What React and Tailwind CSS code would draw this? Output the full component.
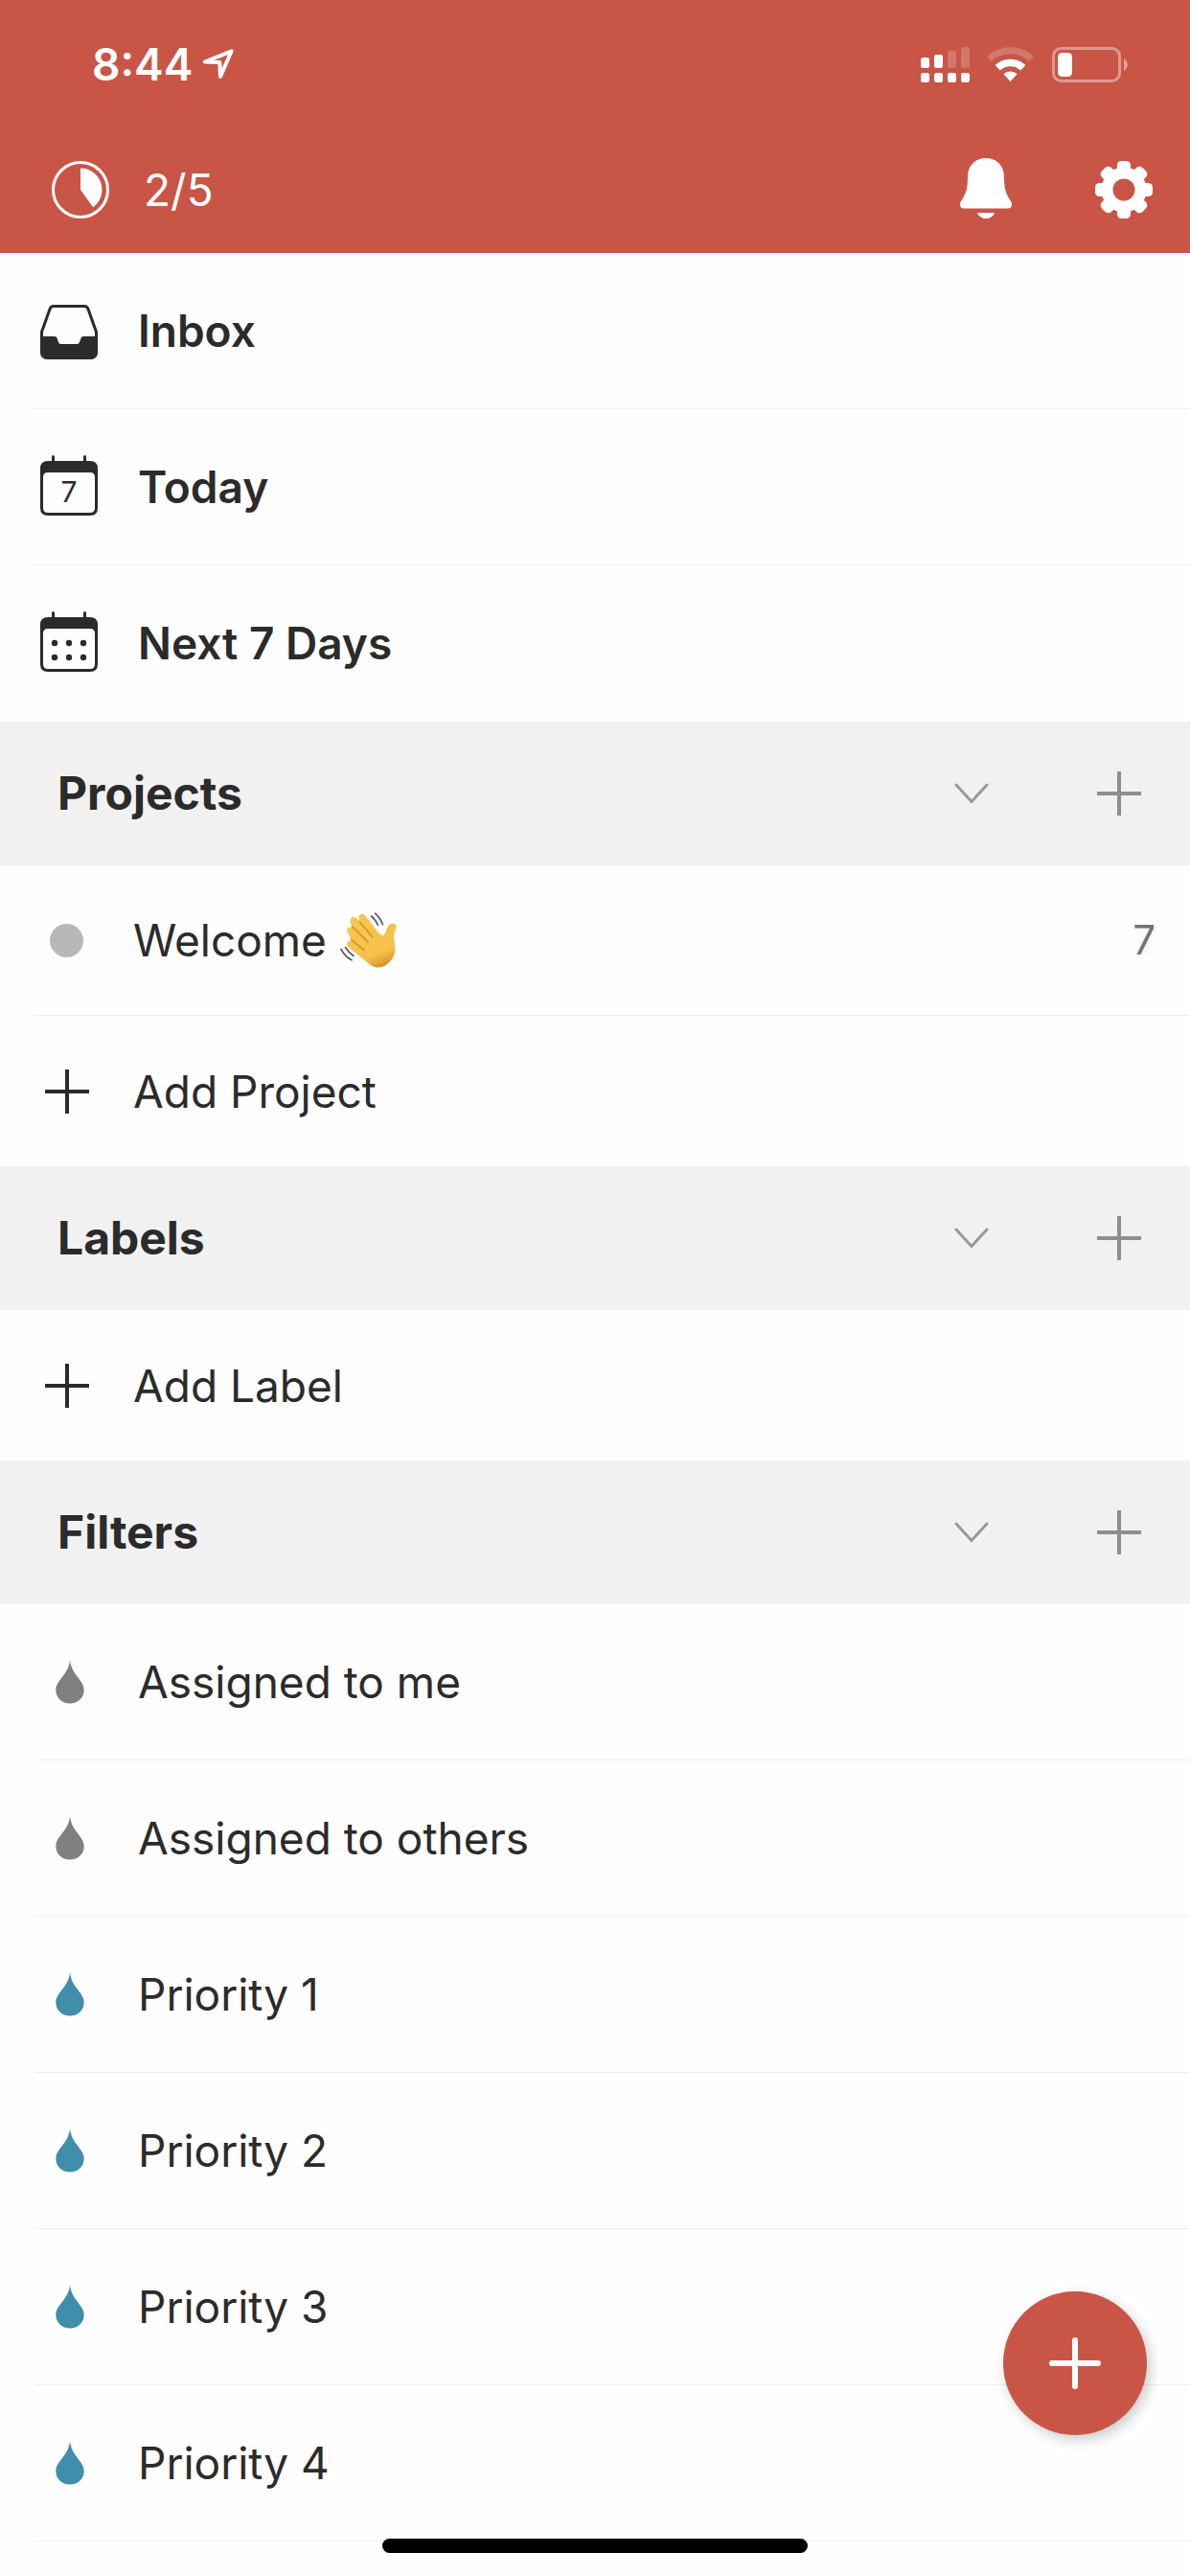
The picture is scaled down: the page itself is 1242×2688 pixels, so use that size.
import React from 'react';

const LocationIcon = () => (
  <svg width="36" height="36" viewBox="0 0 36 36" fill="none" stroke="currentColor" strokeWidth="4" strokeLinejoin="round" aria-hidden="true">
    <path d="M32.7 4.3 4.8 15.6l15.5.4.7 15z" />
  </svg>
);

const SignalIcon = () => (
  <svg width="51" height="37" viewBox="0 0 51 37" fill="currentColor" role="img" aria-label="Signal">
    <rect x="0" y="11" width="9" height="11" rx="2.5" />
    <rect x="14" y="8" width="9" height="14" rx="2.5" />
    <rect x="28" y="4" width="9" height="18" rx="2.5" opacity="0.2" />
    <rect x="42" y="0" width="9" height="22" rx="2.5" opacity="0.2" />
    <rect x="0" y="27" width="9" height="10" rx="2.5" />
    <rect x="14" y="27" width="9" height="10" rx="2.5" />
    <rect x="28" y="27" width="9" height="10" rx="2.5" />
    <rect x="42" y="27" width="9" height="10" rx="2.5" />
  </svg>
);

const WifiIcon = () => (
  <svg width="50" height="37" viewBox="0 0 50 37" fill="none" stroke="currentColor" role="img" aria-label="Wi-Fi">
    <path d="M2.5 12.4a32.3 32.3 0 0 1 44 0" strokeWidth="7" opacity="0.2" />
    <path d="M11.2 21.7a19.5 19.5 0 0 1 26.6 0" strokeWidth="7.5" />
    <path d="M24.5 36l-7.2-7.7a10.5 10.5 0 0 1 14.4 0z" fill="currentColor" stroke="none" />
  </svg>
);

const BatteryIcon = () => (
  <svg width="79" height="37" viewBox="0 0 79 37" role="img" aria-label="Battery">
    <rect x="1.5" y="1.5" width="69" height="34" rx="8" fill="none" stroke="currentColor" strokeWidth="3" opacity="0.4" />
    <path d="M75 12c5 2.5 5 10.5 0 13z" fill="currentColor" opacity="0.45" />
    <rect x="6" y="6" width="15" height="25" rx="4.5" fill="currentColor" />
  </svg>
);

const ProgressIcon = () => (
  <svg width="60" height="60" viewBox="0 0 60 60" aria-hidden="true">
    <circle cx="30" cy="30" r="28.5" fill="none" stroke="currentColor" strokeWidth="3" />
    <path d="M30 30V7.5A22.5 22.5 0 0 1 43.2 48.2z" fill="currentColor" />
  </svg>
);

const BellIcon = () => (
  <svg width="54" height="66" viewBox="0 0 54 66" fill="currentColor" aria-hidden="true">
    <path d="M27 0c11 0 19 8 19 19 0 14 2 18 7 26 2.5 4 .5 7.5-3 7.500H4c-3.500 0-5.500-3.500-3-7.500 5-8 7-12 7-26C8 8 16 0 27 0z" />
    <path d="M18 57h18c-1.500 4-5 6-9 6s-7.500-2-9-6z" />
  </svg>
);

const GearIcon = () => (
  <svg width="60" height="60" viewBox="-30 -30 60 60" fill="currentColor" aria-hidden="true">
    <circle r="17.5" fill="none" stroke="currentColor" strokeWidth="12" />
    {[0, 45, 90, 135, 180, 225, 270, 315].map((angle) => (
      <rect key={angle} x="-7" y="-30" width="14" height="14" rx="4.5" transform={`rotate(${angle})`} />
    ))}
  </svg>
);

const InboxIcon = () => (
  <svg width="60" height="66" viewBox="0 0 60 66" aria-hidden="true">
    <path d="M14 7.5h32q3 0 4 3l8.500 24V54q0 7.500-7.500 7.500H9Q1.500 61.500 1.500 54V34.500L10 10.500q1-3 4-3z" fill="none" stroke="currentColor" strokeWidth="3" />
    <path d="M0 39h15q2 0 2.600 2l1.200 3.500q.8 2.500 2.700 2.500h17q1.900 0 2.700-2.500l1.200-3.500q.6-2 2.600-2h15v16q0 8-8 8H8q-8 0-8-8z" fill="currentColor" />
  </svg>
);

const CalendarIcon = ({ children }) => (
  <svg width="60" height="66" viewBox="0 0 60 66" fill="currentColor" aria-hidden="true">
    <path d="M12 8V1.500a1.500 1.500 0 0 1 3 0V8zM45 8V1.500a1.500 1.500 0 0 1 3 0V8z" />
    <path fillRule="evenodd" d="M8 6h44q8 0 8 8v41q0 8-8 8H8q-8 0-8-8V14q0-8 8-8zm0 12q-5 0-5 5v32q0 5 5 5h44q5 0 5-5V23q0-5-5-5z" />
    {children}
  </svg>
);

const TodayIcon = () => (
  <CalendarIcon>
    <text x="30" y="49" fontSize="30" fontWeight="400" textAnchor="middle">7</text>
  </CalendarIcon>
);

const WeekIcon = () => (
  <CalendarIcon>
    {[33, 48].map((cy) => [15, 30, 45].map((cx) => <circle key={`${cx}-${cy}`} cx={cx} cy={cy} r="3.2" />))}
  </CalendarIcon>
);

const PlusIcon = () => (
  <svg width="46" height="46" viewBox="0 0 46 46" stroke="currentColor" strokeWidth="4" aria-hidden="true">
    <path d="M23 0v46M0 23h46" />
  </svg>
);

const ChevronIcon = () => (
  <svg width="36" height="22" viewBox="0 0 36 22" fill="none" stroke="currentColor" strokeWidth="3" strokeLinecap="round" aria-hidden="true">
    <path d="M2 2l16 17.500L34 2" />
  </svg>
);

const DropIcon = () => (
  <svg width="30" height="46" viewBox="0 0 30 46" fill="currentColor" aria-hidden="true">
    <path d="M15 0c1.500 16 14.700 21 14.700 31.500C29.700 39.500 23.500 45.500 15 45.500S.3 39.500.3 31.500C.3 21 13.500 16 15 0z" />
  </svg>
);

const WaveIcon = () => (
  <svg width="60" height="58" viewBox="0 0 60 58" fill="none" strokeLinecap="round" role="img" aria-label="Waving hand">
    <defs>
      <linearGradient id="skin" x1="0.3" y1="0" x2="0.7" y2="1">
        <stop offset="0" stopColor="#f7c64c" />
        <stop offset="0.75" stopColor="#f4c24a" />
        <stop offset="1" stopColor="#d98e2b" />
      </linearGradient>
    </defs>
    <path
      fill="url(#skin)"
      d="M12.500 5.200c2-.9 4 .2 5.500 1.800l4 4.500-2-4c-1-2.500-.5-4.500 1.300-5.300 2.200-1 4.300.3 5.900 2.300L40 21.500c1.500 2 3.500 3.300 5 2.500 2-1 2.500-4 4-7.500 1.500-3.800 4-5.500 6.800-5 3 .6 3.500 3 2.200 6-2 4.500-2 7-1.400 12 .8 6.500 1.400 12-1.100 17C52 53 46 57.500 39.500 57.500c-4 0-7-1.500-11-5L9 36.500c-2-1.700-2.500-3.500-1.300-5.300 1-1.600 2.800-1.700 4.800-.7L8.500 22c-1.800-2-2-4-.8-5.500 1-1.200 2.500-1.300 4.300-.5l-.5-3.500c-1.800-2.500-1.300-6.200 1-7.300z"
    />
    <path d="M20 9.500l13.500 16M12.500 15l16.500 16M11.500 28.500l13.500 11" stroke="#d9932f" strokeWidth="1.8" />
    <path d="M43 30c-3.500 4-4.500 9-2.500 13" stroke="#e6aa3a" strokeWidth="1" opacity="0.5" />
    <path d="M36.500 1.200c3.500 2.800 6 6.500 8 11.500M32.500 4c3 2.300 5.200 5.500 7 9.500M5.500 36.500c2.500 4 5 6.800 8.500 9M1 38.500c3 5.500 6.500 9 11 11.300" stroke="#555" strokeWidth="1.6" />
  </svg>
);

const views = [
  { label: 'Inbox', icon: InboxIcon },
  { label: 'Today', icon: TodayIcon },
  { label: 'Next 7 Days', icon: WeekIcon }
];

const filters = [
  { label: 'Assigned to me', color: 'text-[#808080]' },
  { label: 'Assigned to others', color: 'text-[#808080]' },
  { label: 'Priority 1', color: 'text-[#408eac]' },
  { label: 'Priority 2', color: 'text-[#408eac]' },
  { label: 'Priority 3', color: 'text-[#408eac]' },
  { label: 'Priority 4', color: 'text-[#408eac]' }
];

const SectionHeader = ({ title }) => (
  <div className="flex h-[150px] items-center bg-[#f1f1f1] pl-15 pr-[51px]">
    <h2 className="flex-1 text-5xl font-bold">{title}</h2>
    <button className="mr-[113px] text-[#999999]" aria-label={`Collapse ${title}`}>
      <ChevronIcon />
    </button>
    <button className="text-[#8e8e8e]" aria-label={`Add to ${title}`}>
      <PlusIcon />
    </button>
  </div>
);

const AddRow = ({ label }) => (
  <button className="flex h-[157px] w-full items-center gap-[46px] pl-[47px] text-left">
    <PlusIcon />
    {label}
  </button>
);

const App = () => {
  return (
    <div className="min-h-screen bg-[#fefefe] font-['Inter',sans-serif] text-[46px] leading-[56px] text-[#2b2b2b]">
      <header className="bg-[#c95546] text-white">
        {/* Status bar */}
        <div className="flex h-[132px] items-center justify-between pt-0.5 pl-24 pr-[65px]">
          <div className="flex items-center gap-2 font-semibold">
            <span>8:44</span>
            <LocationIcon />
          </div>
          <div className="flex items-center gap-[18px]">
            <SignalIcon />
            <WifiIcon />
            <BatteryIcon />
          </div>
        </div>

        {/* Toolbar */}
        <div className="flex h-[132px] items-center justify-between pl-[54px] pr-[39px]">
          <a href="#productivity" className="flex items-center gap-9">
            <ProgressIcon />
            <span>2/5</span>
          </a>
          <div className="flex items-center gap-[87px]">
            <button aria-label="Notifications">
              <BellIcon />
            </button>
            <button aria-label="Settings">
              <GearIcon />
            </button>
          </div>
        </div>
      </header>

      <main>
        <nav aria-label="Views">
          <ul>
            {views.map((view) => {
              const Icon = view.icon;
              return (
                <li key={view.label} className="ml-9 border-b border-[#f0f0f0] last:border-transparent">
                  <a href="#view" className="flex h-[162px] items-center gap-[42px] pl-1.5 font-semibold">
                    <Icon />
                    {view.label}
                  </a>
                </li>
              );
            })}
          </ul>
        </nav>

        <section>
          <SectionHeader title="Projects" />
          <div className="ml-9 border-b border-[#f0f0f0]">
            <a href="#welcome" className="flex h-[156px] items-center pl-4 pr-9">
              <span className="mr-[52px] size-[35px] rounded-full bg-[#b8b8b8]" />
              <span className="flex flex-1 items-center gap-3.5">
                Welcome
                <WaveIcon />
              </span>
              <span className="text-[42px] text-[#737373]">7</span>
            </a>
          </div>
          <AddRow label="Add Project" />
        </section>

        <section>
          <SectionHeader title="Labels" />
          <AddRow label="Add Label" />
        </section>

        <section>
          <SectionHeader title="Filters" />
          <ul>
            {filters.map((filter) => (
              <li key={filter.label} className="ml-9 border-b border-[#f0f0f0]">
                <a href="#filter" className="flex h-[162px] items-center gap-14 pl-[22px]">
                  <span className={filter.color}>
                    <DropIcon />
                  </span>
                  {filter.label}
                </a>
              </li>
            ))}
          </ul>
        </section>
      </main>

      {/* Quick add */}
      <button
        className="fixed right-[45px] bottom-[147px] flex size-[150px] items-center justify-center rounded-full bg-[#c95546] text-white shadow-[4px_5px_14px_rgba(0,0,0,0.2)]"
        aria-label="Add task"
      >
        <svg width="54" height="54" viewBox="0 0 54 54" stroke="currentColor" strokeWidth="6" strokeLinecap="round" aria-hidden="true">
          <path d="M27 3v48M3 27h48" />
        </svg>
      </button>

      {/* Home indicator */}
      <div className="fixed inset-x-0 bottom-6 flex justify-center">
        <div className="h-[15px] w-[444px] rounded-full bg-black" />
      </div>
    </div>
  );
};

export default App;
